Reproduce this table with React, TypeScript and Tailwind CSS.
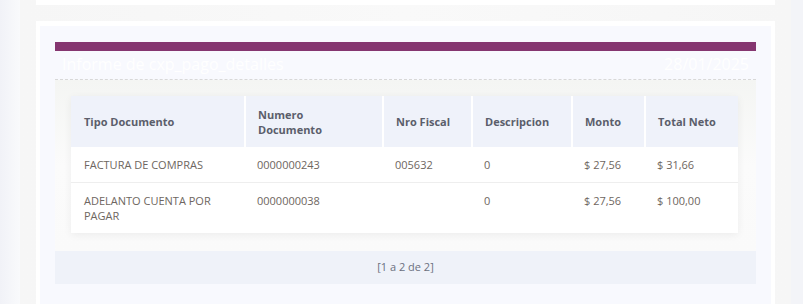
const rows = [
  { tipo: "FACTURA DE COMPRAS", numero: "0000000243", fiscal: "005632", desc: "0", monto: "$ 27,56", neto: "$ 31,66" },
  { tipo: "ADELANTO CUENTA POR PAGAR", numero: "0000000038", fiscal: "", desc: "0", monto: "$ 27,56", neto: "$ 100,00" },
];

const cols = [
  { label: "Tipo Documento", w: "w-[174px]" },
  { label: "Numero Documento", w: "w-[138px]" },
  { label: "Nro Fiscal", w: "w-[89px]" },
  { label: "Descripcion", w: "w-[100px]" },
  { label: "Monto", w: "w-[73px]" },
  { label: "Total Neto", w: "w-[93px]" },
];

export default function App() {
  return (
    <div
      className="flex h-[304px] w-[803px] overflow-hidden bg-[#f3f4f8] text-[11px]"
      style={{ fontFamily: '"Open Sans", "Liberation Sans", sans-serif' }}
    >
      <div className="w-[20px] shrink-0 bg-gradient-to-r from-[#f1f2f7] to-[#f9fafc]" />

      <div className="w-[771px] shrink-0 bg-gradient-to-r from-[#f6f6f6] via-[#f9f9f9] to-[#f6f6f6] px-[16px]">
        <div className="h-[5px] bg-white" />

        <div className="mt-[16px] h-[290px] border-[4px] border-t-[5px] border-white bg-[#f8f9fe] px-[15px] pt-[16px]">
          <div className="h-[9px] bg-[#853670]" />

          <div className="flex h-[29px] items-end justify-between border-b border-dashed border-[#d8d8d8] px-[7px] pb-[3px] text-white">
            <span className="text-[16px]">Informe de cxp_pago_detalles</span>
            <span className="text-[16px]">28/01/2025</span>
          </div>

          <div className="bg-gradient-to-b from-[#f4f5f3] via-[#fbfbfb] to-[#fafafa] px-[16px] pb-[18px] pt-[16px]">
            <table className="w-[667px] table-fixed border-collapse bg-white shadow-[0_2px_8px_rgba(0,0,0,0.06)]">
              <thead>
                <tr className="h-[51px] bg-[#eff2fa]">
                  {cols.map((c) => (
                    <th
                      key={c.label}
                      className={`${c.w} border-x-2 border-white px-[12px] text-left align-middle font-bold leading-[15px] text-[#5b5e6b] first:border-l-0 first:pl-[13px] last:border-r-0`}
                    >
                      {c.label === "Numero Documento" ? (
                        <>
                          Numero
                          <br />
                          Documento
                        </>
                      ) : (
                        c.label
                      )}
                    </th>
                  ))}
                </tr>
              </thead>
              <tbody>
                {rows.map((r, i) => (
                  <tr key={i} className="border-b border-[#eeeeee] last:border-b-0 text-[#6e6660]">
                    <td className="px-[12px] pl-[13px] pt-[10px] pb-[10px] align-top leading-[15px]">{r.tipo}</td>
                    <td className="px-[12px] py-[10px] align-top leading-[15px]">{r.numero}</td>
                    <td className="px-[12px] py-[10px] align-top leading-[15px]">{r.fiscal}</td>
                    <td className="px-[12px] py-[10px] align-top leading-[15px]">{r.desc}</td>
                    <td className="px-[12px] py-[10px] align-top leading-[15px]">{r.monto}</td>
                    <td className="px-[12px] py-[10px] align-top leading-[15px]">{r.neto}</td>
                  </tr>
                ))}
              </tbody>
            </table>
          </div>

          <div className="flex h-[33px] items-center justify-center bg-[#eff2f9] text-[#6b7080]">
            [1 a 2 de 2]
          </div>
        </div>
      </div>

      <div className="w-[12px] shrink-0 bg-[#f3f4f8]" />
    </div>
  );
}
